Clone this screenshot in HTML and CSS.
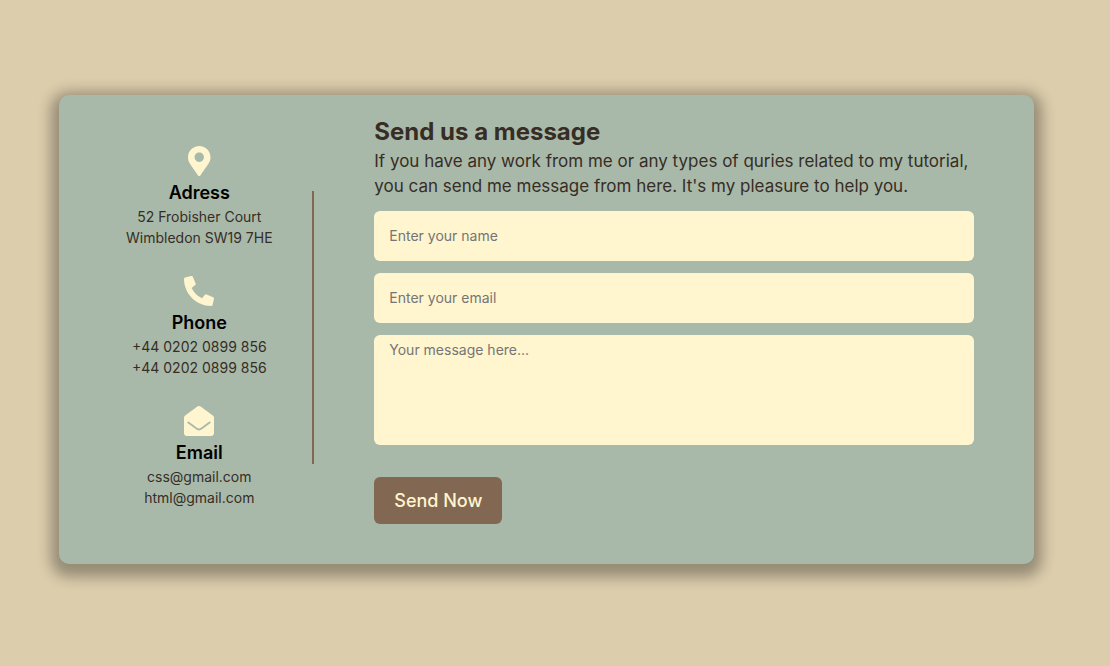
FILE: index.html
```html
<!DOCTYPE html>
<html lang="en">
<head>
<meta charset="utf-8">
<meta name="viewport" content="width=device-width, initial-scale=1">
<title>Contact us</title>
<link rel="stylesheet" href="styles.css">
</head>
<body>
<main class="card">
  <address class="info">
    <div class="detail">
      <svg class="icon" viewBox="0 0 384 512" aria-hidden="true"><path d="M172.268 501.67C26.97 291.031 0 269.413 0 192 0 85.961 85.961 0 192 0s192 85.961 192 192c0 77.413-26.97 99.031-172.268 309.67-9.535 13.774-29.93 13.773-39.464 0zM192 272c44.183 0 80-35.817 80-80s-35.817-80-80-80-80 35.817-80 80 35.817 80 80 80z"/></svg>
      <h3 class="topic">Adress</h3>
      <p class="line">52 Frobisher Court</p>
      <p class="line">Wimbledon SW19 7HE</p>
    </div>
    <div class="detail">
      <svg class="icon" viewBox="0 0 512 512" aria-hidden="true"><path d="M497.39 361.8l-112-48a24 24 0 0 0-28 6.9l-49.6 60.6A370.66 370.66 0 0 1 130.6 204.11l60.6-49.6a23.94 23.94 0 0 0 6.9-28l-48-112A24.16 24.16 0 0 0 122.6.61l-104 24A24 24 0 0 0 0 48c0 256.5 207.9 464 464 464a24 24 0 0 0 23.4-18.6l24-104a24.29 24.29 0 0 0-14.01-27.6z"/></svg>
      <h3 class="topic">Phone</h3>
      <p class="line">+44 0202 0899 856</p>
      <p class="line">+44 0202 0899 856</p>
    </div>
    <div class="detail">
      <svg class="icon" viewBox="0 0 512 512" aria-hidden="true"><path d="M512 464c0 26.51-21.49 48-48 48H48c-26.51 0-48-21.49-48-48V200.724a48 48 0 0 1 18.387-37.776c24.913-19.529 45.501-35.365 164.2-121.511C199.412 29.17 232.797-.347 256 .003c23.198-.354 56.596 29.172 73.413 41.433 118.687 86.137 139.303 101.995 164.2 121.512A48 48 0 0 1 512 200.724V464zm-65.666-196.605c-2.563-3.728-7.7-4.595-11.339-1.907-22.845 16.873-55.462 40.705-105.582 77.079-16.825 12.266-50.21 41.781-73.413 41.43-23.211.344-56.559-29.143-73.413-41.43-50.114-36.37-82.734-60.204-105.582-77.079-3.639-2.688-8.776-1.821-11.339 1.907l-9.072 13.196a7.998 7.998 0 0 0 1.839 10.967c22.887 16.899 55.454 40.69 105.303 76.868 20.274 14.781 56.524 47.813 92.264 47.573 35.724.242 71.961-32.771 92.263-47.573 49.85-36.179 82.418-59.97 105.303-76.868a7.998 7.998 0 0 0 1.839-10.967l-9.071-13.196z"/></svg>
      <h3 class="topic">Email</h3>
      <p class="line">css@gmail.com</p>
      <p class="line">html@gmail.com</p>
    </div>
  </address>
  <div class="divider"></div>
  <section class="message">
    <h2 class="heading">Send us a message</h2>
    <p class="intro">If you have any work from me or any types of quries related to my tutorial, you can send me message from here. It's my pleasure to help you.</p>
    <form class="form">
      <input class="field" type="text" placeholder="Enter your name" aria-label="Your name">
      <input class="field" type="email" placeholder="Enter your email" aria-label="Your email">
      <textarea class="field field-large" placeholder="Your message here..." aria-label="Your message"></textarea>
      <button class="send" type="button">Send Now</button>
    </form>
  </section>
</main>
</body>
</html>
```
FILE: styles.css
```css
* {
  margin: 0;
  padding: 0;
  box-sizing: border-box;
}

body {
  min-height: 100vh;
  display: flex;
  align-items: center;
  justify-content: center;
  padding: 0 17px 7px 0;
  background: #dccdac;
  font-family: Inter, "Liberation Sans", sans-serif;
  color: #372d24;
}

.card {
  box-sizing: content-box;
  width: 80%;
  display: flex;
  align-items: center;
  padding: 20px 60px 40px 40px;
  background: #a8b9aa;
  border-radius: 10px;
  box-shadow: 0 5px 14px 8px rgba(0, 0, 0, 0.32);
}

.info {
  flex: 0 0 200px;
  display: flex;
  flex-direction: column;
  gap: 28px;
  padding-top: 15px;
  font-style: normal;
  text-align: center;
}

.icon {
  display: block;
  height: 30px;
  margin: 0 auto 3px;
  fill: #fff5cf;
}

.topic {
  font-size: 18px;
  line-height: 27px;
  font-weight: 600;
  color: #000;
}

.line {
  font-size: 14px;
  line-height: 21px;
}

.divider {
  flex: 0 0 2px;
  height: 273px;
  margin: 15px 60px 0 13px;
  background: #826852;
}

.message {
  flex: 1;
  min-width: 0;
}

.heading {
  font-size: 24px;
  line-height: 34px;
  font-weight: 700;
}

.intro {
  font-size: 17px;
  line-height: 25px;
}

.form {
  display: flex;
  flex-direction: column;
  align-items: flex-start;
  gap: 12px;
  margin-top: 12px;
}

.field {
  width: 100%;
  height: 50px;
  padding: 0 15px 2px;
  border: 0;
  border-radius: 6px;
  background: #fff5cf;
  color: inherit;
  font-family: inherit;
  font-size: 14px;
}

.field::placeholder {
  color: #757575;
}

.field-large {
  height: 110px;
  padding-top: 6px;
  resize: none;
}

.send {
  margin-top: 20px;
  padding: 10px 20px;
  border: 0;
  border-radius: 6px;
  background: #826852;
  color: #fff5cf;
  font-family: inherit;
  font-size: 18px;
  line-height: 27px;
  font-weight: 500;
  cursor: pointer;
}
```
